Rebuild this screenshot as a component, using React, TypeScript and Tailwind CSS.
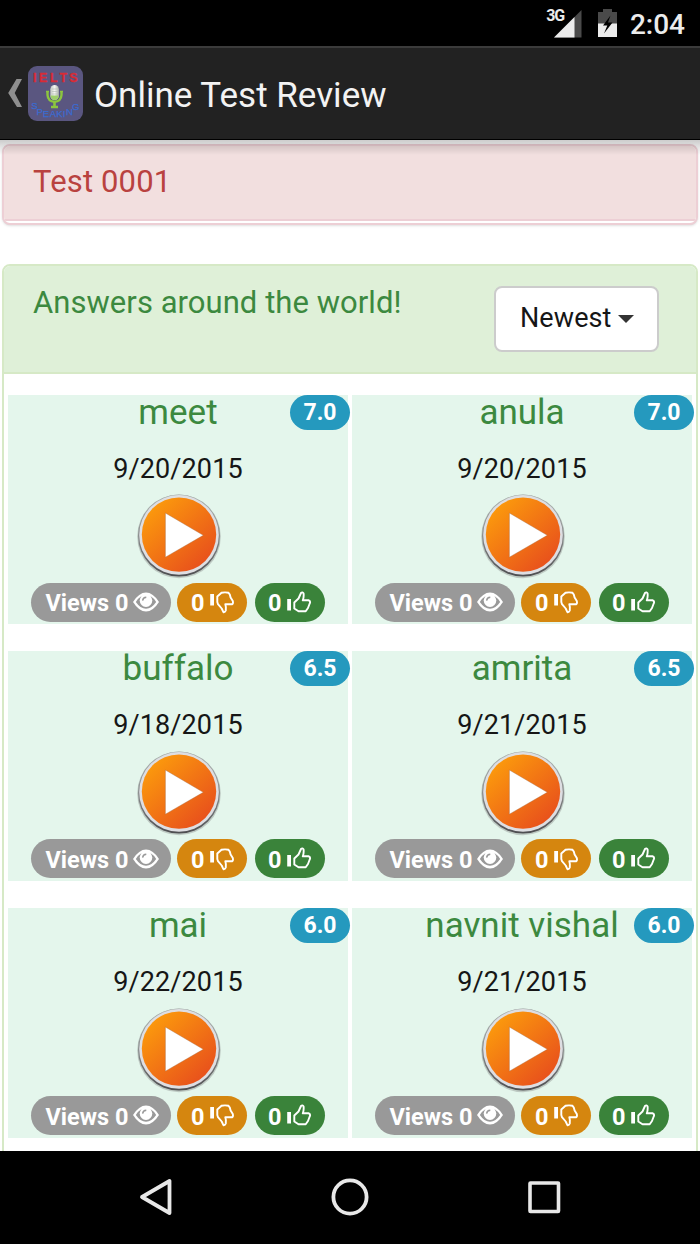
import { ReactNode } from "react";

// ── Types ──────────────────────────────────────────────────────────────────────

type Answer = {
  name: string;
  date: string;
  score: string;
  views: number;
  dislikes: number;
  likes: number;
};

const ANSWERS: Answer[] = [
  { name: "meet", date: "9/20/2015", score: "7.0", views: 0, dislikes: 0, likes: 0 },
  { name: "anula", date: "9/20/2015", score: "7.0", views: 0, dislikes: 0, likes: 0 },
  { name: "buffalo", date: "9/18/2015", score: "6.5", views: 0, dislikes: 0, likes: 0 },
  { name: "amrita", date: "9/21/2015", score: "6.5", views: 0, dislikes: 0, likes: 0 },
  { name: "mai", date: "9/22/2015", score: "6.0", views: 0, dislikes: 0, likes: 0 },
  { name: "navnit vishal", date: "9/21/2015", score: "6.0", views: 0, dislikes: 0, likes: 0 },
];

// ── Icons ──────────────────────────────────────────────────────────────────────

function SignalIcon() {
  return (
    <svg width="28" height="28" viewBox="0 0 28 28">
      <path d="M27.5 0V27.5H0Z" fill="#4a4a4a" />
      <path d="M20.5 7V27.5H0Z" fill="#ececec" />
    </svg>
  );
}

function BatteryIcon() {
  return (
    <svg width="19" height="28" viewBox="0 0 19 28">
      <path d="M0 3H5V0H14V3H19V28H0Z" fill="#4a4a4a" />
      <path d="M0 14.5H19V28H0Z" fill="#ececec" />
      <path d="M12.5 6.5L5 16.5H9.3L6 24.5L14.5 13.5H10Z" fill="#000" />
    </svg>
  );
}

function AppLogo() {
  return (
    <svg width="55" height="55" viewBox="0 0 55 55" className="font-['Liberation_Sans',sans-serif]">
      <defs>
        <linearGradient id="micHead" x1="0" x2="1">
          <stop offset="0" stopColor="#bfc5be" />
          <stop offset="0.5" stopColor="#f4f6f2" />
          <stop offset="1" stopColor="#a9b0a8" />
        </linearGradient>
      </defs>
      <rect width="55" height="55" rx="9" fill="#5a5680" />
      <g fill="#d92b35" stroke="#d92b35" strokeWidth="0.3" fontSize="12.5" fontWeight="bold" textAnchor="middle">
        <text x="6.7" y="16">I</text>
        <text x="15.2" y="16">E</text>
        <text x="25.7" y="16">L</text>
        <text x="35.2" y="16">T</text>
        <text x="45.5" y="16">S</text>
      </g>
      <path d="M19.5 25V29Q20 35.5 26.5 35.8Q33 35.5 33.5 29V25" fill="none" stroke="#8cc63f" strokeWidth="2.4" />
      <path d="M18 25.5H21M32 25.5H35" stroke="#8cc63f" strokeWidth="1.5" />
      <path d="M26.5 36V40M23 41H30" stroke="#8cc63f" strokeWidth="2.6" />
      <rect x="22.3" y="19" width="8.6" height="15" rx="4.3" fill="url(#micHead)" />
      <path d="M22.5 29.5H30.7Q30.5 34 26.6 34Q22.7 34 22.5 29.5Z" fill="#9ed06a" />
      <path d="M24 23H29.3M24 25.5H29.3M24 28H29.3" stroke="#b2b8b0" strokeWidth="0.6" />
      <g fill="#3b6bd0" stroke="#3b6bd0" strokeWidth="0.25" fontSize="9.5" textAnchor="middle">
        <text x="6.5" y="43">S</text>
        <text x="11.7" y="48.5">P</text>
        <text x="18" y="51">E</text>
        <text x="25" y="51">A</text>
        <text x="31.3" y="51">K</text>
        <text x="36" y="50.5">I</text>
        <text x="41.5" y="48.5">N</text>
        <text x="47.7" y="43.5">G</text>
      </g>
    </svg>
  );
}

function EyeIcon() {
  return (
    <svg width="26" height="20" viewBox="0 0 26 20" className="mt-[-4px]">
      <path d="M0 10Q6 0.5 13 0.5Q20 0.5 26 10Q20 19.5 13 19.5Q6 19.5 0 10Z" fill="#fff" />
      <path d="M2.8 10Q4.7 6.6 8 4.6L18 4.6Q21.3 6.6 23.2 10Q18.5 16.8 13 16.8Q7.5 16.8 2.8 10Z" fill="#999" />
      <circle cx="13" cy="8.6" r="6.3" fill="#fff" />
      <path d="M13.3 5.2Q10 5.4 9.6 8.6" fill="none" stroke="#999" strokeWidth="1.4" />
    </svg>
  );
}

function ThumbDownIcon() {
  return (
    <svg width="25" height="23" viewBox="0 0 25 23" className="mt-[-3px]">
      <path d="M0.2 3H4V14.5H0.2Z" fill="#fff" />
      <path
        d="M7.3 5.5L11.5 1.8Q15 1 18.5 1.8L19.8 3.5L20.6 6.5L22.8 10Q23.5 12.5 22 13.3L15.3 13.2Q16.3 16 15.8 19.5Q15 21.5 13.4 21.2L11.7 17.5L8 13.2L7.3 11Z"
        fill="none"
        stroke="#fff"
        strokeWidth="1.9"
        strokeLinejoin="round"
      />
    </svg>
  );
}

function ThumbUpIcon() {
  return (
    <svg width="25" height="23" viewBox="0 0 25 23" className="mt-[-4px]">
      <path d="M0.2 8H4V19.5H0.2Z" fill="#fff" />
      <path
        d="M7.3 11.5L11.5 7.5L14 2Q15.5 0.5 16.6 2.5Q17 6 15.8 9.3H21.8Q23.8 10.3 22.7 12.5L21 17L18.7 20.3H11.5L7.3 17.5Z"
        fill="none"
        stroke="#fff"
        strokeWidth="1.9"
        strokeLinejoin="round"
      />
    </svg>
  );
}

function PlayIcon() {
  return (
    <svg width="86" height="86" viewBox="0 0 86 86">
      <defs>
        <linearGradient id="playFill" x1="0.1" y1="0.1" x2="0.85" y2="0.9">
          <stop offset="0" stopColor="#fc9c0c" />
          <stop offset="1" stopColor="#e8501c" />
        </linearGradient>
        <linearGradient id="playRim" x1="0" y1="0" x2="0" y2="1">
          <stop offset="0" stopColor="#a9b1ae" />
          <stop offset="0.5" stopColor="#8a8d8d" />
          <stop offset="1" stopColor="#4d4d50" />
        </linearGradient>
      </defs>
      <circle cx="43" cy="43.4" r="41.8" fill="#777" opacity="0.35" />
      <circle cx="43" cy="42.6" r="41" fill="url(#playRim)" />
      <circle cx="43" cy="41.9" r="39.8" fill="#dedee2" />
      <circle cx="43" cy="41.6" r="37.2" fill="url(#playFill)" />
      <path d="M29.4 20L67.3 42.3L29.4 64.2Z" fill="#fff" stroke="#a8663a" strokeOpacity="0.5" strokeWidth="0.8" />
    </svg>
  );
}

// ── Answer card ────────────────────────────────────────────────────────────────

function Pill({ className, children }: { className: string; children: ReactNode }) {
  return (
    <span className={`flex h-[39px] items-center rounded-full pt-[4px] text-[23.5px] leading-none font-bold text-white ${className}`}>
      {children}
    </span>
  );
}

function AnswerCard({ answer }: { answer: Answer }) {
  return (
    <div className="relative flex h-[229.5px] flex-col items-center bg-[#e4f6ec]">
      <h3 className="mt-[-1px] text-[35px] leading-[37px] text-[#3c893f]">{answer.name}</h3>
      <span className="absolute top-0 right-[-2px] flex h-[35px] w-[60px] items-center justify-center rounded-full bg-[#2599be] text-[23px] leading-none font-bold text-white">
        {answer.score}
      </span>
      <p className="mt-[22px] text-[27px] leading-[32px] tracking-[0.1px] text-[#161616]">{answer.date}</p>
      <div className="mt-[8.5px] ml-[2px]">
        <PlayIcon />
      </div>
      <div className="mt-[3.3px] flex w-full pl-[23px]">
        <Pill className="w-[140px] bg-[#999] pl-[14.5px]">
          <span className="w-[87px] whitespace-nowrap">Views {answer.views}</span>
          <EyeIcon />
        </Pill>
        <Pill className="ml-[6px] w-[70px] bg-[#d5860f] pl-[14px]">
          <span className="w-[19px]">{answer.dislikes}</span>
          <ThumbDownIcon />
        </Pill>
        <Pill className="ml-[8px] w-[70px] bg-[#3a833a] pl-[13px]">
          <span className="w-[19px]">{answer.likes}</span>
          <ThumbUpIcon />
        </Pill>
      </div>
    </div>
  );
}

// ── App ────────────────────────────────────────────────────────────────────────

export default function App() {
  return (
    <div className="flex h-[1244px] w-[700px] flex-col overflow-hidden bg-white font-[Roboto,sans-serif]">
      {/* Status bar */}
      <div className="flex h-[46px] shrink-0 items-start justify-end bg-black pr-[15px] text-[#ececec]">
        <span className="z-10 mt-[8px] mr-[-10px] text-[16px] leading-[16px] font-bold tracking-[-1.2px]">3G</span>
        <div className="mt-[9.5px] mr-[16px]">
          <SignalIcon />
        </div>
        <div className="mt-[9px] mr-[13px]">
          <BatteryIcon />
        </div>
        <span className="mt-[9px] text-[28px] leading-[32px] font-medium">2:04</span>
      </div>

      {/* Action bar */}
      <header className="flex h-[94px] shrink-0 items-center border-t-2 border-b border-t-[#3b3b3b] border-b-black bg-[#222] pl-[8px]">
        <svg width="14" height="28" viewBox="0 0 14 28" className="mb-[2px]">
          <path d="M8.5 0H14L6.7 14L14 28H9L0.2 14Z" fill="#8f8f8f" />
        </svg>
        <div className="ml-[6px]">
          <AppLogo />
        </div>
        <h1 className="mt-[3px] ml-[11px] text-[35px] leading-none text-[#f3f3f3]">Online Test Review</h1>
      </header>

      {/* Content */}
      <main className="relative flex min-h-0 flex-1 flex-col overflow-hidden px-[2px] pt-[4px]">
        <div className="pointer-events-none absolute inset-x-0 top-0 z-10 h-[15px] bg-linear-to-b from-black/20 to-transparent" />

        <section className="h-[81px] shrink-0 overflow-hidden rounded-lg border-2 border-[#edcfd5] bg-white shadow-sm">
          <h2 className="h-[75px] border-b-2 border-[#edcfd5] bg-[#f2dfdf] pt-[17px] pl-[29px] text-[31px] leading-[37px] tracking-[0.15px] text-[#b9423f]">
            Test 0001
          </h2>
        </section>

        <section className="mt-[39px] h-[1000px] shrink-0 rounded-t-lg border-2 border-[#d6e9c6]">
          <div className="flex h-[107.5px] justify-between rounded-t-md border-b-2 border-[#d6e9c6] bg-[#dff0d8] pr-[37px] pl-[29px]">
            <h2 className="pt-[18px] text-[31px] leading-[37px] tracking-[0.05px] text-[#3c893f]">Answers around the world!</h2>
            <button className="mt-[20px] flex h-[66px] w-[165px] items-center rounded-lg border-2 border-[#ccc] bg-white pb-px pl-[24px] text-[27px] tracking-[0.1px] text-[#161616]">
              Newest
              <span className="mt-px ml-[6px] border-x-[8px] border-t-[8px] border-x-transparent border-t-[#333]" />
            </button>
          </div>
          <div className="grid grid-cols-2 gap-x-[4px] gap-y-[27.2px] px-[4px] pt-[21.3px]">
            {ANSWERS.map((answer) => (
              <AnswerCard key={answer.name} answer={answer} />
            ))}
          </div>
        </section>
      </main>

      {/* Navigation bar */}
      <nav className="flex h-[93px] shrink-0 items-center bg-black pb-px pl-[139px]">
        <svg width="33" height="38" viewBox="0 0 33 38">
          <path d="M30.5 3V35L3 19Z" fill="none" stroke="#e8e8e8" strokeWidth="3.8" strokeLinejoin="round" />
        </svg>
        <svg width="38" height="38" viewBox="0 0 38 38" className="ml-[159px]">
          <circle cx="19" cy="19" r="16.6" fill="none" stroke="#e8e8e8" strokeWidth="3.8" />
        </svg>
        <svg width="34" height="34" viewBox="0 0 34 34" className="ml-[158px]">
          <rect x="3" y="3" width="28.5" height="28.5" rx="0.5" fill="none" stroke="#e8e8e8" strokeWidth="3.6" strokeLinejoin="round" />
        </svg>
      </nav>
    </div>
  );
}
